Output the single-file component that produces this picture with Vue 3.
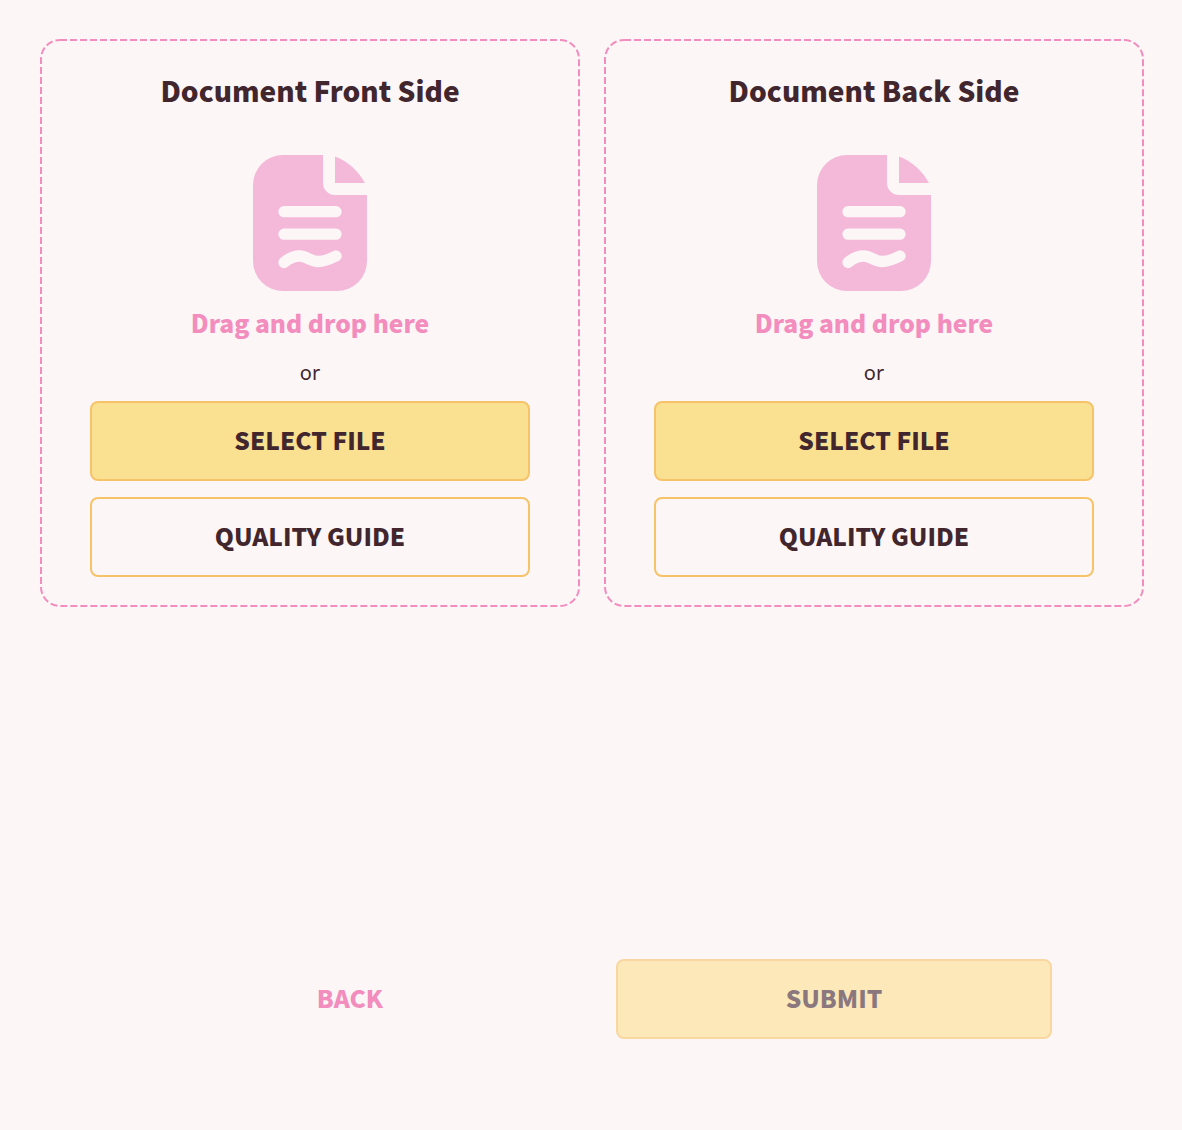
<template>
  <div class="page">
    <div class="cards">
      <div v-for="side in sides" :key="side" class="card">
        <svg class="frame" width="540" height="568" viewBox="0 0 540 568">
          <rect x="1" y="1" width="538" height="566" rx="19" ry="19" fill="none" stroke="#f28dbd" stroke-width="2" stroke-dasharray="7 3" />
        </svg>
        <h2 class="title">{{ side }}</h2>
        <svg class="doc" width="114" height="136" viewBox="0 0 114 136">
          <path d="M30 0H70V28a12 12 0 0 0 12 12H114V106a30 30 0 0 1-30 30H30a30 30 0 0 1-30-30V30a30 30 0 0 1 30-30Z" fill="#f4b8d8" />
          <path d="M82 1.5C95 6 106 17 112 28H82Z" fill="#f4b8d8" />
          <path d="M31 56.7H83M31 79.2H83M31 107.5C36 103 42 101 47 101C53 101 58 106.5 65 106.5C71 106.5 77 104 83 101" fill="none" stroke="#fdf6f7" stroke-width="11.3" stroke-linecap="round" />
        </svg>
        <div class="drag">Drag and drop here</div>
        <div class="or">or</div>
        <button class="btn primary">SELECT FILE</button>
        <button class="btn outline">QUALITY GUIDE</button>
      </div>
    </div>
    <div class="actions">
      <button class="btn back">BACK</button>
      <button class="btn submit">SUBMIT</button>
    </div>
  </div>
</template>

<script setup>
const sides = ['Document Front Side', 'Document Back Side']
</script>

<style>
html, body {
  background: #fdf6f7;
}
</style>

<style scoped>
.page {
  height: 1130px;
  box-sizing: border-box;
  padding: 39px 38px 0 40px;
  font-family: "Noto Sans CJK SC", "Noto Sans", sans-serif;
  color: #41262e;
  overflow: hidden;
}
.cards {
  display: grid;
  grid-template-columns: 540px 540px;
  gap: 24px;
}
.card {
  position: relative;
  height: 568px;
  box-sizing: border-box;
  padding: 32px 50px 0;
  display: flex;
  flex-direction: column;
  align-items: center;
}
.frame {
  position: absolute;
  left: 0;
  top: 0;
}
.title {
  margin: 0;
  font-size: 28px;
  line-height: 38px;
  font-weight: 900;
}
.doc {
  display: block;
  margin-top: 46px;
}
.drag {
  margin-top: 14px;
  font-size: 24.6px;
  line-height: 34px;
  font-weight: 900;
  color: #f28dbd;
}
.or {
  margin-top: 22px;
  font-family: "Noto Sans", sans-serif;
  font-size: 20px;
  line-height: 24px;
}
.btn {
  display: block;
  box-sizing: border-box;
  height: 80px;
  border-radius: 8px;
  border: 2px solid #f6c368;
  background: none;
  font-family: inherit;
  font-size: 24.4px;
  font-weight: 900;
  color: #41262e;
  padding: 0 0 4px;
}
.primary {
  width: 440px;
  margin-top: 16px;
  background: #fae091;
}
.outline {
  width: 440px;
  margin-top: 16px;
}
.actions {
  display: grid;
  grid-template-columns: 436px 436px;
  gap: 48px;
  margin: 352px 0 0 92px;
}
.back {
  border-color: transparent;
  color: #f28dbd;
}
.submit {
  background: #fce091;
  opacity: 0.6;
}
</style>
